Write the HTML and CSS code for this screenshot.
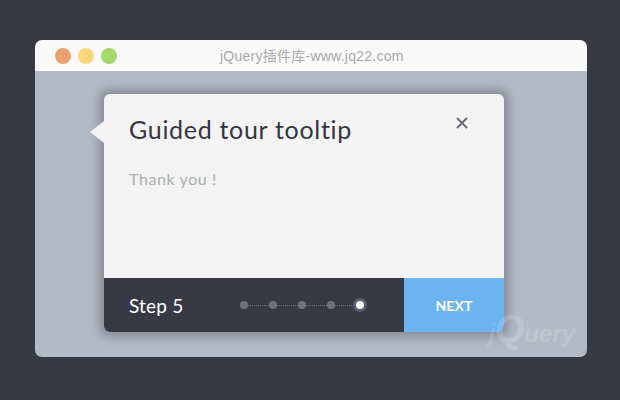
FILE: index.html
```html
<!DOCTYPE html>
<html lang="en">
<head>
    <meta charset="UTF-8">
    <meta name="viewport" content="width=device-width, initial-scale=1.0">
    <title>Guided tour tooltip</title>
    <link rel="stylesheet" href="styles.css">
</head>
<body>
    <div class="window">
        <div class="titlebar">
            <div class="lights">
                <span class="light light-red"></span>
                <span class="light light-yellow"></span>
                <span class="light light-green"></span>
            </div>
            <div class="site-name">jQuery插件库-www.jq22.com</div>
        </div>
        <div class="stage">
            <div class="tooltip">
                <span class="arrow"></span>
                <div class="tooltip-body">
                    <div class="tooltip-head">
                        <h1>Guided tour tooltip</h1>
                        <svg class="close" width="12" height="12" viewBox="0 0 12 12">
                            <path d="M1 1L11 11M11 1L1 11" stroke="#6b6e78" stroke-width="2" fill="none"/>
                        </svg>
                    </div>
                    <p>Thank you !</p>
                </div>
                <div class="tooltip-foot">
                    <div class="step">Step 5</div>
                    <div class="dots">
                        <span class="dot"></span>
                        <span class="line"></span>
                        <span class="dot"></span>
                        <span class="line"></span>
                        <span class="dot"></span>
                        <span class="line"></span>
                        <span class="dot"></span>
                        <span class="line"></span>
                        <span class="dot dot-active"></span>
                    </div>
                    <button class="next">NEXT</button>
                </div>
            </div>
            <div class="watermark"><span class="wm-j">j</span><span class="wm-q">Q</span><span class="wm-rest">uery</span></div>
        </div>
    </div>
</body>
</html>
```

FILE: styles.css
```css
body {
    margin: 0;
    padding: 40px 0 0 35px;
    height: 400px;
    box-sizing: border-box;
    overflow: hidden;
    background-color: #373a45;
    font-family: 'Lato', sans-serif;
}

.window {
    width: 552px;
    border-radius: 7px;
    overflow: hidden;
}

.titlebar {
    height: 31px;
    display: flex;
    align-items: center;
    position: relative;
    background-color: #f9f9f9;
}

.lights {
    display: flex;
    gap: 7px;
    padding-left: 20px;
}

.light {
    width: 16px;
    height: 16px;
    border-radius: 50%;
}

.light-red {
    background-color: #e8a26b;
}

.light-yellow {
    background-color: #fad77b;
}

.light-green {
    background-color: #a7d96b;
}

.site-name {
    position: absolute;
    left: 185px;
    top: 7px;
    font-family: 'Liberation Sans', 'Noto Sans CJK SC', sans-serif;
    font-size: 14px;
    line-height: 18px;
    letter-spacing: 0.25px;
    color: #a9a9a9;
}

.stage {
    height: 286px;
    padding: 23px 0 0 69px;
    box-sizing: border-box;
    position: relative;
    background-color: #b4b9c6;
}

.tooltip {
    width: 400px;
    height: 238px;
    display: flex;
    flex-direction: column;
    position: relative;
    border-radius: 6px;
    background-color: #f3f3f3;
    box-shadow: 0 0 10px 5px rgba(110, 113, 125, 0.6);
}

.arrow {
    position: absolute;
    left: -14px;
    top: 27px;
    border-top: 11px solid transparent;
    border-bottom: 11px solid transparent;
    border-right: 14px solid #f3f3f3;
}

.tooltip-body {
    flex: 1;
    padding: 20px 35px 0 25px;
}

.tooltip-head {
    display: flex;
    justify-content: space-between;
    align-items: flex-start;
}

.tooltip-head h1 {
    margin: 0;
    font-size: 25px;
    line-height: 30px;
    font-weight: 400;
    letter-spacing: 0.7px;
    color: #33363f;
}

.close {
    margin-top: 3px;
    margin-right: 1px;
}

.tooltip-body p {
    margin: 25px 0 0;
    font-size: 16px;
    line-height: 20px;
    letter-spacing: 0.6px;
    color: #a9aeb0;
}

.tooltip-foot {
    height: 54px;
    display: flex;
    align-items: center;
    border-radius: 0 0 6px 6px;
    overflow: hidden;
    background-color: #373a45;
}

.step {
    width: 111px;
    padding-left: 25px;
    font-size: 19px;
    letter-spacing: 0.2px;
    color: #fff;
}

.dots {
    display: flex;
    align-items: center;
    width: 124px;
}

.dot {
    width: 8px;
    height: 8px;
    flex: none;
    border-radius: 50%;
    background-color: #6f727e;
}

.dot-active {
    background-color: #fff;
    box-shadow: 0 0 0 3px #5a5d69;
}

.line {
    flex: 1;
    border-top: 1px dotted #777a86;
}

.next {
    margin-left: auto;
    width: 100px;
    height: 54px;
    padding: 0;
    border: none;
    background-color: #6cb3f2;
    color: #fff;
    font-family: 'Lato', sans-serif;
    font-size: 14px;
    font-weight: 700;
    letter-spacing: 0.1px;
}

.watermark {
    position: absolute;
    right: 12px;
    bottom: 4px;
    font-family: 'Liberation Sans', sans-serif;
    line-height: 32px;
    font-style: italic;
    font-weight: 700;
    color: rgba(255, 255, 255, 0.18);
}

.wm-j {
    font-size: 26px;
    font-weight: 400;
}

.wm-q {
    font-size: 38px;
}

.wm-rest {
    font-size: 24px;
}
```
